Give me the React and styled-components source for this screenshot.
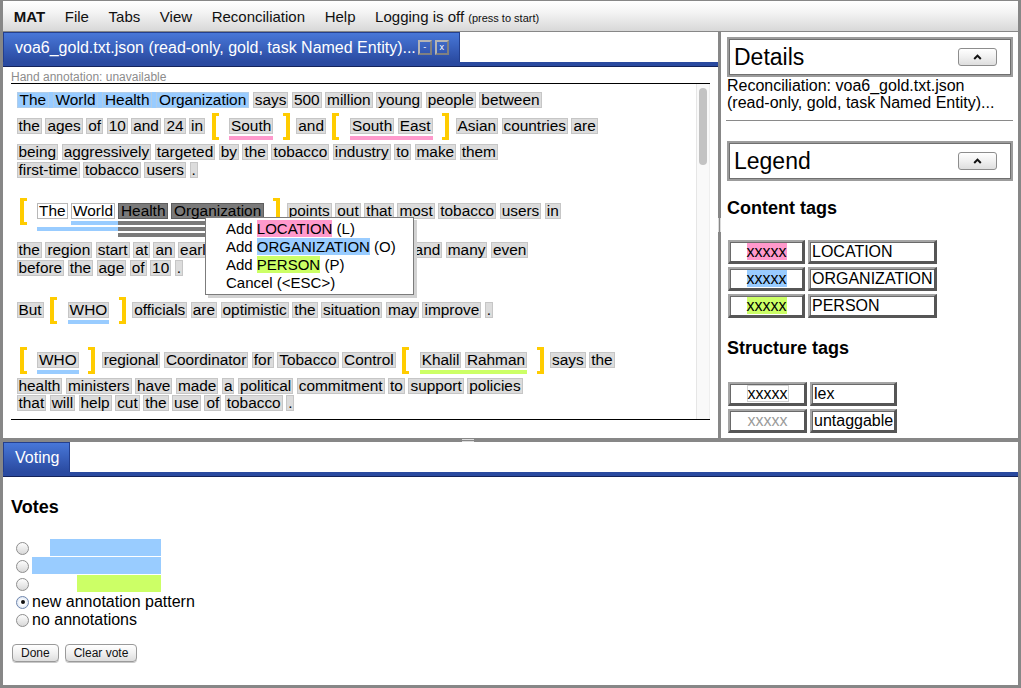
import React from 'react';
import styled, { createGlobalStyle, css } from 'styled-components';

const C = {
  frame: '#878787',
  pink: '#ff99cc',
  blue: '#99ccff',
  green: '#ccff66',
  yellow: '#ffcc00',
  dark: '#7a7a7a',
  tabTop: '#4877d8',
  tabBottom: '#2a4aa0',
};

const GlobalStyle = createGlobalStyle`
  *, *::before, *::after { box-sizing: border-box; }
  html, body { margin: 0; padding: 0; }
  body {
    background: ${C.frame};
    font-family: "Liberation Sans", Arial, Helvetica, sans-serif;
    color: #000;
  }
`;

const Frame = styled.div`
  width: 100%;
  height: 100vh;
  display: flex;
  flex-direction: column;
  padding: 1px 3px 3px;
  background: ${C.frame};
`;

/* ---------- menu bar ---------- */
const MenuBar = styled.nav`
  height: 30px;
  flex-shrink: 0;
  margin-bottom: 1px;
  display: flex;
  align-items: center;
  padding-left: 1px;
  background: linear-gradient(#ffffff, #f3f3f3 40%, #d8d8d8);
  font-size: 15px;
  color: #111;
`;
const MenuItem = styled.span`
  padding: 0 9.8px;
  white-space: nowrap;
  font-weight: ${p => (p.$bold ? 700 : 400)};
`;
const MenuNote = styled.span`
  font-size: 11px;
`;

/* ---------- layout ---------- */
const TopSection = styled.div`
  height: 406px;
  flex-shrink: 0;
  display: flex;
`;
const LeftPanel = styled.section`
  width: 715px;
  flex-shrink: 0;
  background: #fff;
  display: flex;
  flex-direction: column;
`;
const VDivider = styled.div`
  width: 3px;
  flex-shrink: 0;
  display: flex;
  flex-direction: column;
  align-items: center;
  justify-content: center;
  padding-bottom: 20px;
`;
const VGrip = styled.span`
  width: 3px;
  height: 14px;
  border-left: 1px solid #dadada;
  border-right: 1px solid #dadada;
`;
const HSplitter = styled.div`
  height: 4px;
  flex-shrink: 0;
  display: flex;
  align-items: center;
  justify-content: center;
`;
const HGrip = styled.span`
  width: 12px;
  height: 3px;
  margin-right: 85px;
  border-top: 1px solid #dadada;
  border-bottom: 1px solid #dadada;
`;

/* ---------- tabs ---------- */
const TabBar = styled.div`
  height: 35px;
  flex-shrink: 0;
  display: flex;
  align-items: flex-end;
  padding-bottom: 5px;
  background: linear-gradient(to top, #14235a 0 1px, ${C.tabBottom} 1px 5px, #fff 5px);
`;
const Tab = styled.div`
  height: 30px;
  display: flex;
  align-items: center;
  padding: 0 10px 0 11px;
  border: 1px solid #233f8e;
  border-bottom: none;
  background: linear-gradient(${C.tabTop}, ${C.tabBottom});
  color: #fff;
  font-size: 16px;
  white-space: nowrap;
`;
const TabButton = styled.span`
  width: 14px;
  height: 15px;
  margin-left: ${p => p.$ml}px;
  border: 2px solid #b4b4b4;
  border-right-color: #808080;
  border-bottom-color: #808080;
  display: flex;
  align-items: center;
  justify-content: center;
  font-size: 9px;
  line-height: 1;
  color: #fff;
`;

/* ---------- document ---------- */
const LeftBody = styled.div`
  flex: 1;
  padding: 0 8px;
  display: flex;
  flex-direction: column;
`;
const HandNote = styled.div`
  height: 16px;
  padding-top: 4px;
  font-size: 12px;
  line-height: 13px;
  color: #8c8c8c;
`;
const ScrollBox = styled.div`
  position: relative;
  height: 337px;
  display: flex;
  border-top: 1px solid #000;
  border-bottom: 1px solid #000;
`;
const Doc = styled.div`
  flex: 1;
  padding: 8px 0 0 5.5px;
  font-size: 15.4px;
  overflow: hidden;
`;
const ScrollTrack = styled.div`
  width: 14px;
  flex-shrink: 0;
  background: #f9f9f9;
  border-left: 1px solid #e6e6e6;
  border-right: 1px solid #eeeeee;
  padding: 4px 2px 0 2px;
`;
const ScrollThumb = styled.div`
  height: 77px;
  border-radius: 4px;
  background: #c3c3c3;
`;

const Line = styled.div`
  display: flex;
  align-items: flex-start;
  gap: 3.5px;
  height: ${p => p.$h}px;
  white-space: nowrap;
`;

const Token = styled.span`
  display: inline-block;
  flex-shrink: 0;
  height: 16px;
  line-height: 14px;
  padding: 0 1px;
  border: 1px solid #c6c6c6;
  background: #dcdcdc;
  white-space: nowrap;
  ${p => p.$v === 'blue' && css`
    background: transparent;
    border-color: #b0cdea;
    padding: 0 2px;
  `}
  ${p => p.$v === 'white' && css`
    background: #fff;
    border-color: #b8b8b8;
  `}
  ${p => p.$v === 'dark' && css`
    background: ${C.dark};
    border-color: #5e5e5e;
    padding: 0 1.5px;
  `}
`;

const EntitySpan = styled.span`
  display: flex;
  gap: 3.5px;
  background: ${C.blue};
`;

/* the part of a line that lies under the pop-up menu */
const CoveredRun = styled.span`
  display: flex;
  gap: 3.5px;
  flex-shrink: 0;
  width: ${p => p.$w}px;
  overflow: hidden;
`;

const BracketGroup = styled.span`
  display: flex;
  align-items: flex-start;
  margin: 0 3px;
  flex-shrink: 0;
`;
const Bracket = styled.span`
  flex-shrink: 0;
  box-sizing: content-box;
  width: 3px;
  height: 21px;
  margin-top: -5px;
  border: 3px solid ${C.yellow};
  ${p => (p.$side === 'left'
    ? css`border-right: none; border-left-width: 4px; margin-right: 10.5px;`
    : css`border-left: none; border-right-width: 4px; margin-left: 9.5px;`)}
`;
const AnnotGrid = styled.span`
  display: grid;
  grid-template-rows: 16px;
  grid-auto-rows: 4px;
  row-gap: 2px;
  align-items: start;
`;
const AnnotToken = styled(Token)`
  grid-row: 1;
  grid-column: ${p => p.$col};
`;
const GridGap = styled.span`
  grid-row: 1;
  grid-column: ${p => p.$col};
  width: 3.5px;
`;
const Stripe = styled.span`
  grid-row: ${p => p.$row + 1};
  grid-column: ${p => `${p.$from} / ${p.$to}`};
  height: 4px;
  background: ${p => p.$color};
`;

const ContextMenu = styled.div`
  position: absolute;
  left: 194px;
  top: 133px;
  width: 209px;
  padding: 2px 0 2px 20px;
  background: #fff;
  border: 1px solid #7c7c7c;
  box-shadow: 3px 3px 0 #d2d2d2;
  font-size: 15px;
  line-height: 18px;
  z-index: 2;
`;
const MenuOption = styled.div`
  white-space: nowrap;
`;
const TagLabel = styled.span`
  background: ${p => p.$c};
`;

/* ---------- right panel ---------- */
const RightPanel = styled.aside`
  flex: 1;
  background: #fff;
  padding: 5px 5px 0 6px;
  display: flex;
  flex-direction: column;
`;
const TitleBox = styled.div`
  height: 40px;
  flex-shrink: 0;
  margin-top: ${p => p.$mt || 0}px;
  display: flex;
  align-items: center;
  justify-content: space-between;
  padding: 0 14px 0 5px;
  border: 2px solid #9c9c9c;
  box-shadow: inset 0 0 0 1px #707070;
`;
const TitleText = styled.span`
  font-size: 23px;
  line-height: 1;
`;
const CollapseButton = styled.span`
  width: 39px;
  height: 18px;
  border: 1px solid #8d8d8d;
  border-radius: 3px;
  background: linear-gradient(#ffffff, #f0f0f0 50%, #dedede);
  display: flex;
  align-items: center;
  justify-content: center;
`;
const DetailText = styled.div`
  font-size: 16px;
  line-height: 17px;
`;
const Rule = styled.div`
  height: 1px;
  margin: 9px 0 0 -1px;
  background: #8a8a8a;
`;
const Heading = styled.h3`
  margin: ${p => p.$mt}px 0 0;
  font-size: 18px;
  line-height: 21px;
  font-weight: 700;
`;
const LegendGrid = styled.div`
  display: grid;
  grid-template-columns: ${p => p.$w}px max-content;
  gap: 3px;
  margin: ${p => p.$mt}px 0 0 1px;
  align-self: flex-start;
`;
const LegendCell = styled.div`
  height: 24px;
  display: flex;
  align-items: center;
  justify-content: ${p => (p.$center ? 'center' : 'flex-start')};
  padding: 0 1px 0 2px;
  border-style: solid;
  border-width: 2px 3px 3px 2px;
  border-color: #a5a5a5 #565656 #565656 #a5a5a5;
  box-shadow: inset 1px 1px 0 #6a6a6a;
  font-size: 16px;
  background: #fff;
  white-space: nowrap;
`;
const Swatch = styled.span`
  display: inline-block;
  line-height: 17px;
  background: ${p => p.$bg || 'transparent'};
  color: ${p => (p.$muted ? '#9a9a9a' : '#000')};
  ${p => p.$outlined && css`
    border: 1px solid #d0d0d0;
    line-height: 15px;
  `}
`;

/* ---------- bottom ---------- */
const BottomSection = styled.section`
  flex: 1;
  background: #fff;
  display: flex;
  flex-direction: column;
`;
const BottomBody = styled.div`
  padding: 0 8px;
  display: flex;
  flex-direction: column;
  align-items: flex-start;
`;
const VoteList = styled.div`
  margin-top: 21px;
  display: flex;
  flex-direction: column;
`;
const VoteRow = styled.div`
  display: grid;
  grid-template-columns: 21px 18px 27px 84px;
  height: 18px;
  align-items: center;
`;
const Radio = styled.span`
  grid-column: 1;
  width: 13px;
  height: 13px;
  margin-left: 5px;
  border-radius: 50%;
  border: 1px solid #8e8e8e;
  background: linear-gradient(#fdfdfd, #d9d9d9);
  display: flex;
  align-items: center;
  justify-content: center;
  ${p => p.$checked && css`
    border-color: #6f86ad;
    background: radial-gradient(circle, #ffffff 30%, #c9d7ec 100%);
    &::after {
      content: '';
      width: 4px;
      height: 4px;
      border-radius: 50%;
      background: #111;
    }
  `}
`;
const VoteBar = styled.span`
  grid-column: ${p => `${p.$from} / 5`};
  align-self: start;
  height: 17px;
  background: ${p => p.$color};
`;
const VoteLabel = styled.span`
  grid-column: 2 / 5;
  font-size: 16px;
  line-height: 18px;
  white-space: nowrap;
`;
const ButtonRow = styled.div`
  margin-top: 15px;
  padding-left: 1px;
  display: flex;
  gap: 6px;
`;
const PushButton = styled.button`
  height: 18px;
  padding: 0 8px;
  border: 1px solid #9a9a9a;
  border-radius: 4px;
  background: linear-gradient(#ffffff, #f1f1f1 50%, #dddddd);
  font-family: "Liberation Sans", Arial, sans-serif;
  font-size: 12px;
  line-height: 16px;
  color: #111;
  box-shadow: 0 1px 0 #c8c8c8;
`;

/* ---------- helpers ---------- */
function Ws({ t, v }) {
  return (
    <>
      {t.split(' ').map((w, i) => (
        <Token key={i} $v={v}>{w}</Token>
      ))}
    </>
  );
}

function Annot({ words, variants = [], stripes }) {
  return (
    <BracketGroup>
      <Bracket $side="left" />
      <AnnotGrid>
        {words.map((w, i) => (
          <React.Fragment key={i}>
            {i > 0 && <GridGap $col={2 * i} />}
            <AnnotToken $col={2 * i + 1} $v={variants[i]}>{w}</AnnotToken>
          </React.Fragment>
        ))}
        {stripes.map((s, i) => (
          <Stripe key={i} $row={s.row} $from={s.from} $to={s.to} $color={s.color} />
        ))}
      </AnnotGrid>
      <Bracket $side="right" />
    </BracketGroup>
  );
}

const full = (n, color) => [{ row: 1, from: 1, to: 2 * n, color }];

const Caret = () => (
  <svg width="9" height="6" viewBox="0 0 9 6">
    <polyline points="1.2,5 4.5,1.6 7.8,5" fill="none" stroke="#111" strokeWidth="2" />
  </svg>
);

export default function App() {
  return (
    <Frame>
      <GlobalStyle />
      <MenuBar>
        <MenuItem $bold>MAT</MenuItem>
        <MenuItem>File</MenuItem>
        <MenuItem>Tabs</MenuItem>
        <MenuItem>View</MenuItem>
        <MenuItem>Reconciliation</MenuItem>
        <MenuItem>Help</MenuItem>
        <MenuItem>Logging is off <MenuNote>(press to start)</MenuNote></MenuItem>
      </MenuBar>

      <TopSection>
        <LeftPanel>
          <TabBar>
            <Tab>
              voa6_gold.txt.json (read-only, gold, task Named Entity)...
              <TabButton $ml={2}>-</TabButton>
              <TabButton $ml={3}>x</TabButton>
            </Tab>
          </TabBar>
          <LeftBody>
            <HandNote>Hand annotation: unavailable</HandNote>
            <ScrollBox>
              <Doc>
                <Line $h={26}>
                  <EntitySpan><Ws t="The World Health Organization" v="blue" /></EntitySpan>
                  <Ws t="says 500 million young people between" />
                </Line>
                <Line $h={26}>
                  <Ws t="the ages of 10 and 24 in" />
                  <Annot words={['South']} stripes={full(1, C.pink)} />
                  <Ws t="and" />
                  <Annot words={['South', 'East']} stripes={full(2, C.pink)} />
                  <Ws t="Asian countries are" />
                </Line>
                <Line $h={18}>
                  <Ws t="being aggressively targeted by the tobacco industry to make them" />
                </Line>
                <Line $h={41}>
                  <Ws t="first-time tobacco users ." />
                </Line>

                <Line $h={39}>
                  <Annot
                    words={['The', 'World', 'Health', 'Organization']}
                    variants={['white', 'white', 'dark', 'dark']}
                    stripes={[
                      { row: 1, from: 3, to: 5, color: C.blue },
                      { row: 1, from: 5, to: 8, color: C.dark },
                      { row: 2, from: 1, to: 5, color: C.blue },
                      { row: 2, from: 5, to: 8, color: C.dark },
                      { row: 3, from: 5, to: 8, color: C.dark },
                    ]}
                  />
                  <Ws t="points out that most tobacco users in" />
                </Line>
                <Line $h={18}>
                  <Ws t="the region start at an" />
                  <CoveredRun $w={231}>
                    <Ws t="early" />
                  </CoveredRun>
                  <Ws t="and many even" />
                </Line>
                <Line $h={42}>
                  <Ws t="before the age of 10 ." />
                </Line>

                <Line $h={50}>
                  <Ws t="But" />
                  <Annot words={['WHO']} stripes={full(1, C.blue)} />
                  <Ws t="officials are optimistic the situation may improve ." />
                </Line>

                <Line $h={26}>
                  <Annot words={['WHO']} stripes={full(1, C.blue)} />
                  <Ws t="regional Coordinator for Tobacco Control" />
                  <Annot words={['Khalil', 'Rahman']} stripes={full(2, C.green)} />
                  <Ws t="says the" />
                </Line>
                <Line $h={17}>
                  <Ws t="health ministers have made a political commitment to support policies" />
                </Line>
                <Line $h={17}>
                  <Ws t="that will help cut the use of tobacco ." />
                </Line>
              </Doc>
              <ScrollTrack>
                <ScrollThumb />
              </ScrollTrack>
              <ContextMenu>
                <MenuOption>Add <TagLabel $c={C.pink}>LOCATION</TagLabel> (L)</MenuOption>
                <MenuOption>Add <TagLabel $c={C.blue}>ORGANIZATION</TagLabel> (O)</MenuOption>
                <MenuOption>Add <TagLabel $c={C.green}>PERSON</TagLabel> (P)</MenuOption>
                <MenuOption>Cancel (&lt;ESC&gt;)</MenuOption>
              </ContextMenu>
            </ScrollBox>
          </LeftBody>
        </LeftPanel>

        <VDivider>
          <VGrip />
        </VDivider>

        <RightPanel>
          <TitleBox>
            <TitleText>Details</TitleText>
            <CollapseButton><Caret /></CollapseButton>
          </TitleBox>
          <DetailText>
            Reconciliation: voa6_gold.txt.json
            <br />
            (read-only, gold, task Named Entity)...
          </DetailText>
          <Rule />
          <TitleBox $mt={20}>
            <TitleText>Legend</TitleText>
            <CollapseButton><Caret /></CollapseButton>
          </TitleBox>
          <Heading $mt={17}>Content tags</Heading>
          <LegendGrid $w={77} $mt={21}>
            <LegendCell $center><Swatch $bg={C.pink}>xxxxx</Swatch></LegendCell>
            <LegendCell>LOCATION</LegendCell>
            <LegendCell $center><Swatch $bg={C.blue}>xxxxx</Swatch></LegendCell>
            <LegendCell>ORGANIZATION</LegendCell>
            <LegendCell $center><Swatch $bg={C.green}>xxxxx</Swatch></LegendCell>
            <LegendCell>PERSON</LegendCell>
          </LegendGrid>
          <Heading $mt={20}>Structure tags</Heading>
          <LegendGrid $w={79} $mt={23}>
            <LegendCell $center><Swatch $outlined>xxxxx</Swatch></LegendCell>
            <LegendCell>lex</LegendCell>
            <LegendCell $center><Swatch $muted>xxxxx</Swatch></LegendCell>
            <LegendCell>untaggable</LegendCell>
          </LegendGrid>
        </RightPanel>
      </TopSection>

      <HSplitter>
        <HGrip />
      </HSplitter>

      <BottomSection>
        <TabBar>
          <Tab>Voting</Tab>
        </TabBar>
        <BottomBody>
          <Heading $mt={20}>Votes</Heading>
          <VoteList>
            <VoteRow>
              <Radio />
              <VoteBar $from={3} $color={C.blue} />
            </VoteRow>
            <VoteRow>
              <Radio />
              <VoteBar $from={2} $color={C.blue} />
            </VoteRow>
            <VoteRow>
              <Radio />
              <VoteBar $from={4} $color={C.green} />
            </VoteRow>
            <VoteRow>
              <Radio $checked />
              <VoteLabel>new annotation pattern</VoteLabel>
            </VoteRow>
            <VoteRow>
              <Radio />
              <VoteLabel>no annotations</VoteLabel>
            </VoteRow>
          </VoteList>
          <ButtonRow>
            <PushButton>Done</PushButton>
            <PushButton>Clear vote</PushButton>
          </ButtonRow>
        </BottomBody>
      </BottomSection>
    </Frame>
  );
}
